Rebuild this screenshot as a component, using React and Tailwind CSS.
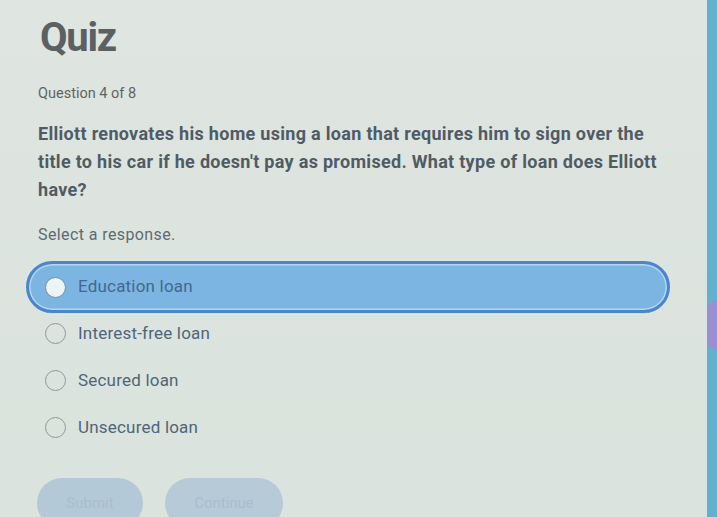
import React from "react";

const options = ["Education loan", "Interest-free loan", "Secured loan", "Unsecured loan"];

function Radio({ selected }) {
  return (
    <span
      className={
        selected
          ? "block w-[21px] h-[21px] rounded-full bg-[#eef3f4] border-[1.5px] border-[#6e8fa8] shrink-0"
          : "block w-[21px] h-[21px] rounded-full border-[1.5px] border-[#8a9a99] shrink-0"
      }
    />
  );
}

export default function App() {
  return (
    <div
      className="flex w-[717px] h-[517px] overflow-hidden bg-[#dbe3de]"
      style={{ fontFamily: "Roboto, 'Liberation Sans', sans-serif" }}
    >
      <div className="flex-1 min-w-0 flex flex-col pl-[38px] pr-[37px] bg-[linear-gradient(180deg,#dfe5e1_0%,#dae3dd_100%)]">
        <h1 className="mt-[14px] ml-[2px] text-[40px] leading-[48px] font-bold text-[#5b6063] tracking-[-1.3px]">
          Quiz
        </h1>
        <div className="mt-[23px] text-[14.5px] leading-[18px] text-[#5d6467]">
          Question 4 of 8
        </div>
        <p className="mt-[17px] w-[630px] text-[18px] leading-[28px] font-bold text-[#505b64] tracking-[0.3px]">
          Elliott renovates his home using a loan that requires him to sign over the title to his car if he doesn't
          pay as promised. What type of loan does Elliott have?
        </p>
        <div className="mt-[21px] text-[16px] leading-[20px] text-[#5f6a70] tracking-[0.4px]">
          Select a response.
        </div>
        <div className="mt-[16px] -ml-[12px] flex flex-col">
          <div className="h-[52px] flex items-center gap-[12px] pl-[16px] rounded-full border-[3px] border-[#4a86cf] bg-[#7db5e2] shadow-[inset_0_0_0_1.5px_#b6d6ef]">
            <Radio selected />
            <span className="text-[17px] text-[#41698f] tracking-[0.2px]">{options[0]}</span>
          </div>
          {options.slice(1).map((o, i) => (
            <div
              key={o}
              className={
                i === 0
                  ? "-mt-[3px] h-[47px] flex items-center gap-[12px] pl-[19px]"
                  : "h-[47px] flex items-center gap-[12px] pl-[19px]"
              }
            >
              <Radio />
              <span className="text-[17px] text-[#506579] tracking-[0.2px]">{o}</span>
            </div>
          ))}
        </div>
        <div className="mt-[27px] -ml-px flex gap-[22px]">
          <div className="w-[106px] h-[50px] rounded-full bg-[#b4c9d7] flex items-center justify-center text-[15px] text-[#a8becc]">
            Submit
          </div>
          <div className="w-[118px] h-[50px] rounded-full bg-[#b6cad8] flex items-center justify-center text-[15px] text-[#a8becc]">
            Continue
          </div>
        </div>
      </div>
      <div className="w-[10px] shrink-0 flex flex-col bg-[#62b2cf]">
        <div className="h-[300px]" />
        <div className="h-[50px] bg-[#9a8fd0] rounded-l-full" />
      </div>
    </div>
  );
}
